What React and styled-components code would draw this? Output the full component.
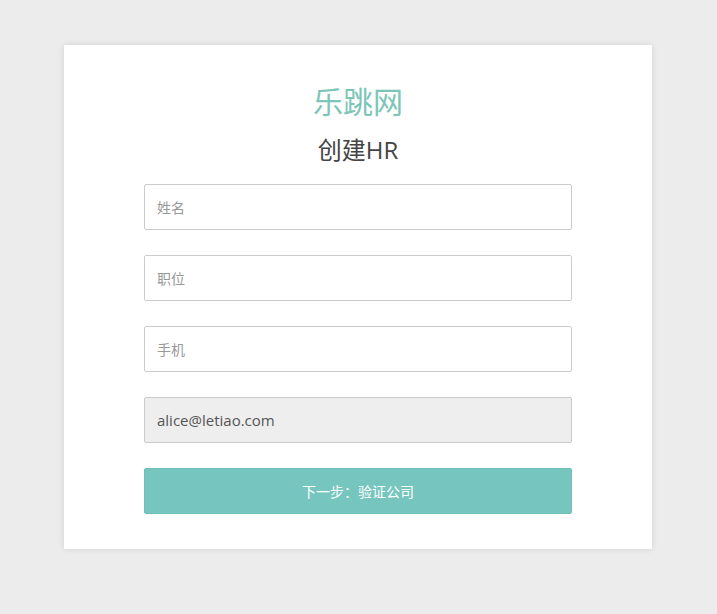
import React from 'react';
import styled, { createGlobalStyle } from 'styled-components';

const GlobalStyle = createGlobalStyle`
  html, body {
    margin: 0;
    padding: 0;
    background: #ececec;
  }
  body {
    font-family: "Open Sans", "Noto Sans CJK SC", sans-serif;
  }
  * {
    box-sizing: border-box;
  }
`;

const Page = styled.div`
  padding: 45px 0 0 64px;
  min-height: 614px;
`;

const Card = styled.div`
  width: 588px;
  background: #fff;
  box-shadow: 0 0 6px rgba(0, 0, 0, 0.12);
  padding: 35px 80px 35px;
`;

const Logo = styled.h1`
  margin: 0;
  text-align: center;
  font-size: 30px;
  font-weight: normal;
  line-height: 44px;
  color: #7cc6b7;
`;

const Title = styled.h2`
  margin: 8px 0 16px;
  text-align: center;
  font-size: 24px;
  font-weight: normal;
  line-height: 36px;
  color: #444;
`;

const Form = styled.form`
  display: flex;
  flex-direction: column;
  gap: 25px;
`;

const Input = styled.input`
  width: 100%;
  height: 46px;
  padding: 0 12px;
  border: 1px solid #cccccc;
  border-radius: 2px;
  font-family: "Open Sans", "Noto Sans CJK SC", sans-serif;
  font-size: ${(p) => (p.disabled ? '15px' : '14px')};
  color: #555;
  background: ${(p) => (p.disabled ? '#eeeeee' : '#fff')};
  outline: none;

  &::placeholder {
    color: #999;
  }
`;

const Submit = styled.button`
  width: 100%;
  height: 46px;
  border: 1px solid #6fbfb7;
  border-radius: 2px;
  background: #76c6bf;
  color: #fff;
  font-family: "Open Sans", "Noto Sans CJK SC", sans-serif;
  font-size: 14px;
  cursor: pointer;
`;

export default function App() {
  return (
    <>
      <GlobalStyle />
      <Page>
        <Card>
          <Logo>乐跳网</Logo>
          <Title>创建HR</Title>
          <Form onSubmit={(e) => e.preventDefault()}>
            <Input placeholder="姓名" />
            <Input placeholder="职位" />
            <Input placeholder="手机" />
            <Input disabled defaultValue="alice@letiao.com" />
            <Submit type="submit">下一步：验证公司</Submit>
          </Form>
        </Card>
      </Page>
    </>
  );
}
